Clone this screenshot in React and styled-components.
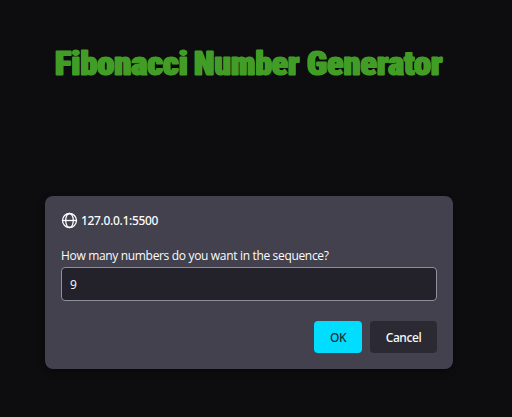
import React from "react";
import styled, { createGlobalStyle } from "styled-components";

const GlobalStyle = createGlobalStyle`
  * { box-sizing: border-box; }
  body { margin: 0; background: #0d0d0f; }
`;

const Page = styled.main`
  display: flex;
  flex-direction: column;
  height: 417px;
  overflow: hidden;
  background: #0d0d0f;
  font-family: "Open Sans", "Noto Sans", sans-serif;
`;

const Title = styled.h1`
  display: flex;
  gap: 6px;
  height: 48px;
  margin: 39px 0 0 55px;
  color: #429d26;
  font: 900 34px/48px Roboto, "Open Sans", sans-serif;
  font-stretch: 75%;
  -webkit-text-stroke: 1.1px #429d26;
  text-shadow: 0.9px 0 #429d26, -0.9px 0 #429d26, 0 -0.4px #429d26;
`;

const Word = styled.span`
  width: ${(p) => p.$width}px;
  white-space: nowrap;
  transform: scaleX(${(p) => p.$scale});
  transform-origin: left;
`;

const Dialog = styled.section`
  display: flex;
  flex-direction: column;
  width: 408px;
  height: 173px;
  margin: 109px 0 0 45px;
  padding: 16px;
  border-radius: 8px;
  background: #42414d;
  color: #fbfbfe;
  box-shadow: 0 2px 6px rgba(0, 0, 0, 0.4);
`;

const Origin = styled.header`
  display: flex;
  align-items: center;
  gap: 3px;
  height: 17px;
  font-family: "Noto Sans", sans-serif;
  font-size: 12px;
  font-weight: 500;
  letter-spacing: -0.33px;
`;

const Message = styled.label`
  height: 18px;
  margin-top: 18px;
  font-size: 12px;
  line-height: 18px;
  letter-spacing: -0.33px;
  white-space: nowrap;
`;

const Field = styled.input`
  width: 376px;
  height: 34px;
  margin: 2px 0 0;
  padding: 0 8px;
  border: 1px solid #8f8f9d;
  border-radius: 4px;
  outline: none;
  background: #23222b;
  color: #fbfbfe;
  font: 12px "Open Sans", sans-serif;
`;

const Actions = styled.footer`
  display: flex;
  justify-content: flex-end;
  gap: 8px;
  margin-top: 20px;
`;

const Button = styled.button`
  width: ${(p) => (p.$primary ? 48 : 67)}px;
  height: 32px;
  padding: 0;
  border: 0;
  border-radius: 4px;
  background: ${(p) => (p.$primary ? "#00ddff" : "#2b2a33")};
  color: ${(p) => (p.$primary ? "#2b2a33" : "#fbfbfe")};
  font: 500 12px "Noto Sans", sans-serif;
  letter-spacing: -0.4px;
`;

const Globe = () => (
  <svg width="17" height="17" viewBox="0 0 17 17" fill="none" stroke="#fbfbfe" strokeWidth="1.3">
    <circle cx="8.5" cy="8.5" r="7" />
    <ellipse cx="8.5" cy="8.5" rx="3.8" ry="7" />
    <path d="M1.5 8.5h14" />
  </svg>
);

export default function App() {
  return (
    <Page>
      <GlobalStyle />
      <Title>
        <Word $width={133} $scale={1.01}>Fibonacci</Word>
        <Word $width={107} $scale={0.98}>Number</Word>
        <Word $width={137} $scale={1}>Generator</Word>
      </Title>
      <Dialog role="dialog">
        <Origin>
          <Globe />
          <span>127.0.0.1:5500</span>
        </Origin>
        <Message htmlFor="count">How many numbers do you want in the sequence?</Message>
        <Field id="count" defaultValue="9" />
        <Actions>
          <Button $primary>OK</Button>
          <Button>Cancel</Button>
        </Actions>
      </Dialog>
    </Page>
  );
}
